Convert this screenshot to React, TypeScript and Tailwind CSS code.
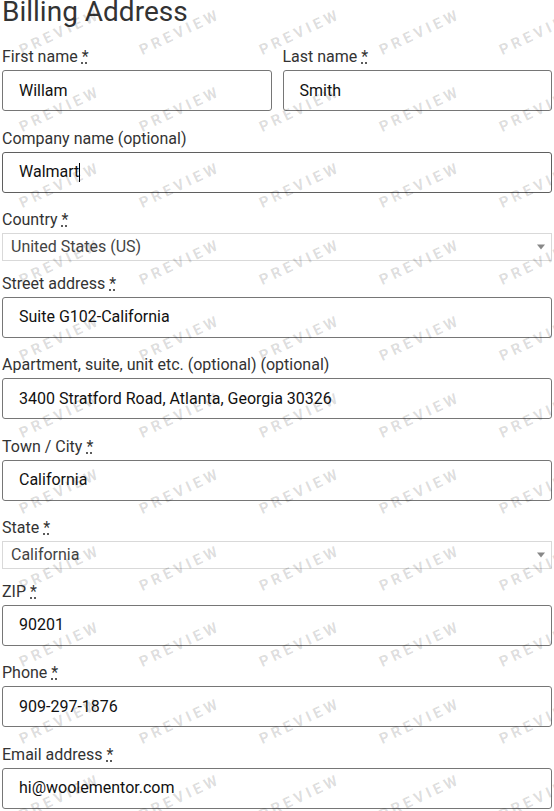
import React from "react";

type Field =
  | { kind: "input"; label: string; required: boolean; value: string; caret?: boolean }
  | { kind: "select"; label: string; required: boolean; value: string };

const fields: Field[] = [
  { kind: "input", label: "Company name (optional)", required: false, value: "Walmart", caret: true },
  { kind: "select", label: "Country", required: true, value: "United States (US)" },
  { kind: "input", label: "Street address", required: true, value: "Suite G102-California" },
  {
    kind: "input",
    label: "Apartment, suite, unit etc. (optional) (optional)",
    required: false,
    value: "3400 Stratford Road, Atlanta, Georgia 30326",
  },
  { kind: "input", label: "Town / City", required: true, value: "California" },
  { kind: "select", label: "State", required: true, value: "California" },
  { kind: "input", label: "ZIP", required: true, value: "90201" },
  { kind: "input", label: "Phone", required: true, value: "909-297-1876" },
  { kind: "input", label: "Email address", required: true, value: "hi@woolementor.com" },
];

function Label({ text, required }: { text: string; required: boolean }) {
  return (
    <label className="block text-[16px] leading-6 mb-[1px] text-[#333333] whitespace-nowrap">
      {text}
      {required && (
        <>
          {" "}
          <abbr title="required" className="text-[#333333]">
            *
          </abbr>
        </>
      )}
    </label>
  );
}

function TextBox({ value, caret }: { value: string; caret?: boolean }) {
  return (
    <div
      className={`h-[41px] flex items-center px-4 rounded-[3px] border bg-white text-[16px] text-[#111111] ${
        caret ? "border-[#5f5f5f]" : "border-[#767676]"
      }`}
    >
      <span className="whitespace-nowrap">{value}</span>
      {caret && <span className="inline-block w-[1px] h-[19px] bg-black" />}
    </div>
  );
}

function SelectBox({ value }: { value: string }) {
  return (
    <div className="relative h-[28px] flex items-center pl-2 border border-[#d9d9d9] bg-white text-[16px] text-[#444444]">
      <span className="whitespace-nowrap">{value}</span>
      <span className="absolute right-[6px] top-1/2 -translate-y-1/2 w-0 h-0 border-l-4 border-r-4 border-t-[5px] border-l-transparent border-r-transparent border-t-[#888888]" />
    </div>
  );
}

function Watermark() {
  const cells = Array.from({ length: 5 * 12 });
  return (
    <div className="pointer-events-none absolute inset-0 overflow-hidden">
      <div className="grid grid-cols-[repeat(5,120px)] auto-rows-[76.5px] -mt-[6px]">
        {cells.map((_, i) => (
          <div key={i} className="flex items-center justify-center">
            <span className="-rotate-[25deg] text-[15px] font-bold tracking-[3.5px] text-black/[0.14] select-none">
              PREVIEW
            </span>
          </div>
        ))}
      </div>
    </div>
  );
}

export default function App() {
  return (
    <div
      className="relative w-[554px] min-h-[811px] bg-white px-[2px]"
      style={{ fontFamily: "Roboto, 'Liberation Sans', sans-serif" }}
    >
      <h3 className="text-[28px] leading-[24px] font-normal text-[#333333] whitespace-nowrap">Billing Address</h3>
      <div className="mt-[21px]">
        <div className="flex justify-between">
          <div className="w-[49%]">
            <Label text="First name" required />
            <div className="mb-[15.5px]">
              <TextBox value="Willam" />
            </div>
          </div>
          <div className="w-[49%]">
            <Label text="Last name" required />
            <div className="mb-[15.5px]">
              <TextBox value="Smith" />
            </div>
          </div>
        </div>
        {fields.map((f, i) => (
          <div key={i}>
            <Label text={f.label} required={f.required} />
            {f.kind === "input" ? (
              <div className="mb-[15.5px]">
                <TextBox value={f.value} caret={f.caret} />
              </div>
            ) : (
              <div className="mb-[10.5px]">
                <SelectBox value={f.value} />
              </div>
            )}
          </div>
        ))}
      </div>
      <Watermark />
    </div>
  );
}
